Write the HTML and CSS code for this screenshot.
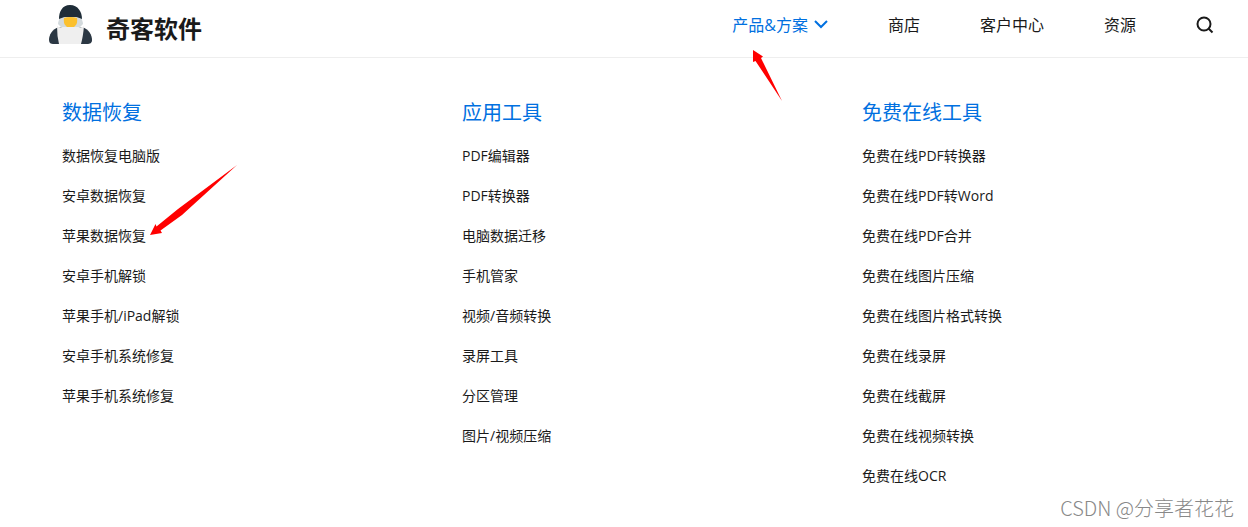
FILE: index.html
```html
<!DOCTYPE html>
<html lang="zh-CN">
<head>
<meta charset="utf-8">
<title>奇客软件</title>
<link rel="stylesheet" href="styles.css">
</head>
<body>
<header class="header">
  <a class="brand" href="#">
    <svg class="brand-mark" viewBox="0 0 44 40" aria-hidden="true">
      <path fill="#2b3743" d="M11 22C4 24 1 30 1 35c0 3 2 4 4 4h34c3 0 5-1 5-4 0-5-3-11-10-13z"/>
      <path fill="#d3dadd" d="M12 12c-1 3-2 5-2 7l5 5h15l5-5c0-2-1-4-2-7z"/>
      <path fill="#1f2d38" d="M22 0C14 0 11 7 11 14c3-1 4-2 6-2h11c2 0 3 1 6 2 0-7-4-14-12-14z"/>
      <path fill="#fbc02d" d="M16 13q6-2 13 0 1 5-2 8l-2 2h-5l-2-2q-3-3-2-8z"/>
      <path fill="#efefef" d="M9 21q2 2 6 1h15q4 1 6-1-1 11-3 18H11Q9 31 9 21z"/>
    </svg>
    <span class="brand-name">奇客软件</span>
  </a>
  <nav class="nav">
    <a class="nav-link nav-link-active" href="#">产品&amp;方案
      <svg class="chevron" viewBox="0 0 14 9" aria-hidden="true"><path d="M1 1l6 6 6-6"/></svg>
    </a>
    <a class="nav-link" href="#">商店</a>
    <a class="nav-link" href="#">客户中心</a>
    <a class="nav-link" href="#">资源</a>
    <button class="search" type="button" aria-label="搜索">
      <svg viewBox="0 0 18 18" aria-hidden="true"><circle cx="8" cy="8" r="6.5"/><path d="M12.5 12.5l4 4"/></svg>
    </button>
  </nav>
</header>
<main class="menu">
  <section class="column">
    <h2 class="title">数据恢复</h2>
    <ul class="links">
      <li><a href="#">数据恢复电脑版</a></li>
      <li><a href="#">安卓数据恢复</a></li>
      <li><a href="#">苹果数据恢复</a></li>
      <li><a href="#">安卓手机解锁</a></li>
      <li><a href="#">苹果手机/iPad解锁</a></li>
      <li><a href="#">安卓手机系统修复</a></li>
      <li><a href="#">苹果手机系统修复</a></li>
    </ul>
  </section>
  <section class="column">
    <h2 class="title">应用工具</h2>
    <ul class="links">
      <li><a href="#">PDF编辑器</a></li>
      <li><a href="#">PDF转换器</a></li>
      <li><a href="#">电脑数据迁移</a></li>
      <li><a href="#">手机管家</a></li>
      <li><a href="#">视频/音频转换</a></li>
      <li><a href="#">录屏工具</a></li>
      <li><a href="#">分区管理</a></li>
      <li><a href="#">图片/视频压缩</a></li>
    </ul>
  </section>
  <section class="column">
    <h2 class="title">免费在线工具</h2>
    <ul class="links">
      <li><a href="#">免费在线PDF转换器</a></li>
      <li><a href="#">免费在线PDF转Word</a></li>
      <li><a href="#">免费在线PDF合并</a></li>
      <li><a href="#">免费在线图片压缩</a></li>
      <li><a href="#">免费在线图片格式转换</a></li>
      <li><a href="#">免费在线录屏</a></li>
      <li><a href="#">免费在线截屏</a></li>
      <li><a href="#">免费在线视频转换</a></li>
      <li><a href="#">免费在线OCR</a></li>
    </ul>
  </section>
</main>
<svg class="arrow arrow-nav" viewBox="0 0 30 52" aria-hidden="true"><path d="M0 0l10 6.500-2 1.500 21 43L2.500 11 0 12z"/></svg>
<svg class="arrow arrow-item" viewBox="0 0 88 72" aria-hidden="true"><path d="M0 70l5.500-11 1 2.500L28 44 87 0 32 50 10.500 65.500 12 68z"/></svg>
<div class="watermark">CSDN @分享者花花</div>
</body>
</html>
```
FILE: styles.css
```css
* {
  box-sizing: border-box;
}

body {
  position: relative;
  min-height: 100vh;
  margin: 0;
  background: #fff;
  color: #1a1a1a;
  font-family: "Open Sans", "Noto Sans CJK SC", sans-serif;
  font-size: 14px;
}

a {
  color: inherit;
  text-decoration: none;
}

.header {
  display: flex;
  align-items: center;
  justify-content: space-between;
  height: 58px;
  padding: 0 34px 8px 48px;
  border-bottom: 1px solid #eee;
}

.brand {
  display: flex;
  align-items: center;
  gap: 14px;
}

.brand-mark {
  width: 44px;
  height: 40px;
}

.brand-name {
  padding-top: 8px;
  font-size: 24px;
  font-weight: 700;
  line-height: 32px;
}

.nav {
  display: flex;
  align-items: center;
  gap: 60px;
  font-size: 16px;
  line-height: 24px;
}

.nav-link {
  display: flex;
  align-items: center;
  gap: 6px;
}

.nav-link-active {
  color: #0070e0;
}

.chevron {
  width: 14px;
  height: 9px;
  fill: none;
  stroke: currentColor;
  stroke-width: 2;
}

.search {
  display: flex;
  padding: 0;
  border: 0;
  background: none;
  color: #1a1a1a;
}

.search svg {
  width: 18px;
  height: 18px;
  fill: none;
  stroke: currentColor;
  stroke-width: 2;
}

.menu {
  display: grid;
  grid-template-columns: repeat(3, 1fr);
  padding: 38px 24px 0;
}

.column {
  padding-left: 38px;
}

.title {
  margin: 0 0 6px;
  color: #0070e0;
  font-size: 20px;
  font-weight: 400;
  line-height: 34px;
}

.links {
  margin: 0;
  padding: 0;
  list-style: none;
  line-height: 40px;
}

.arrow {
  position: absolute;
  fill: #f00;
  pointer-events: none;
}

.arrow-nav {
  top: 50px;
  left: 753px;
  width: 30px;
  height: 52px;
}

.arrow-item {
  top: 165px;
  left: 150px;
  width: 88px;
  height: 72px;
}

.watermark {
  position: absolute;
  right: 14px;
  bottom: 4px;
  color: #888;
  font-family: "Noto Sans CJK SC", sans-serif;
  font-size: 20px;
  font-weight: 300;
  line-height: 30px;
}
```
